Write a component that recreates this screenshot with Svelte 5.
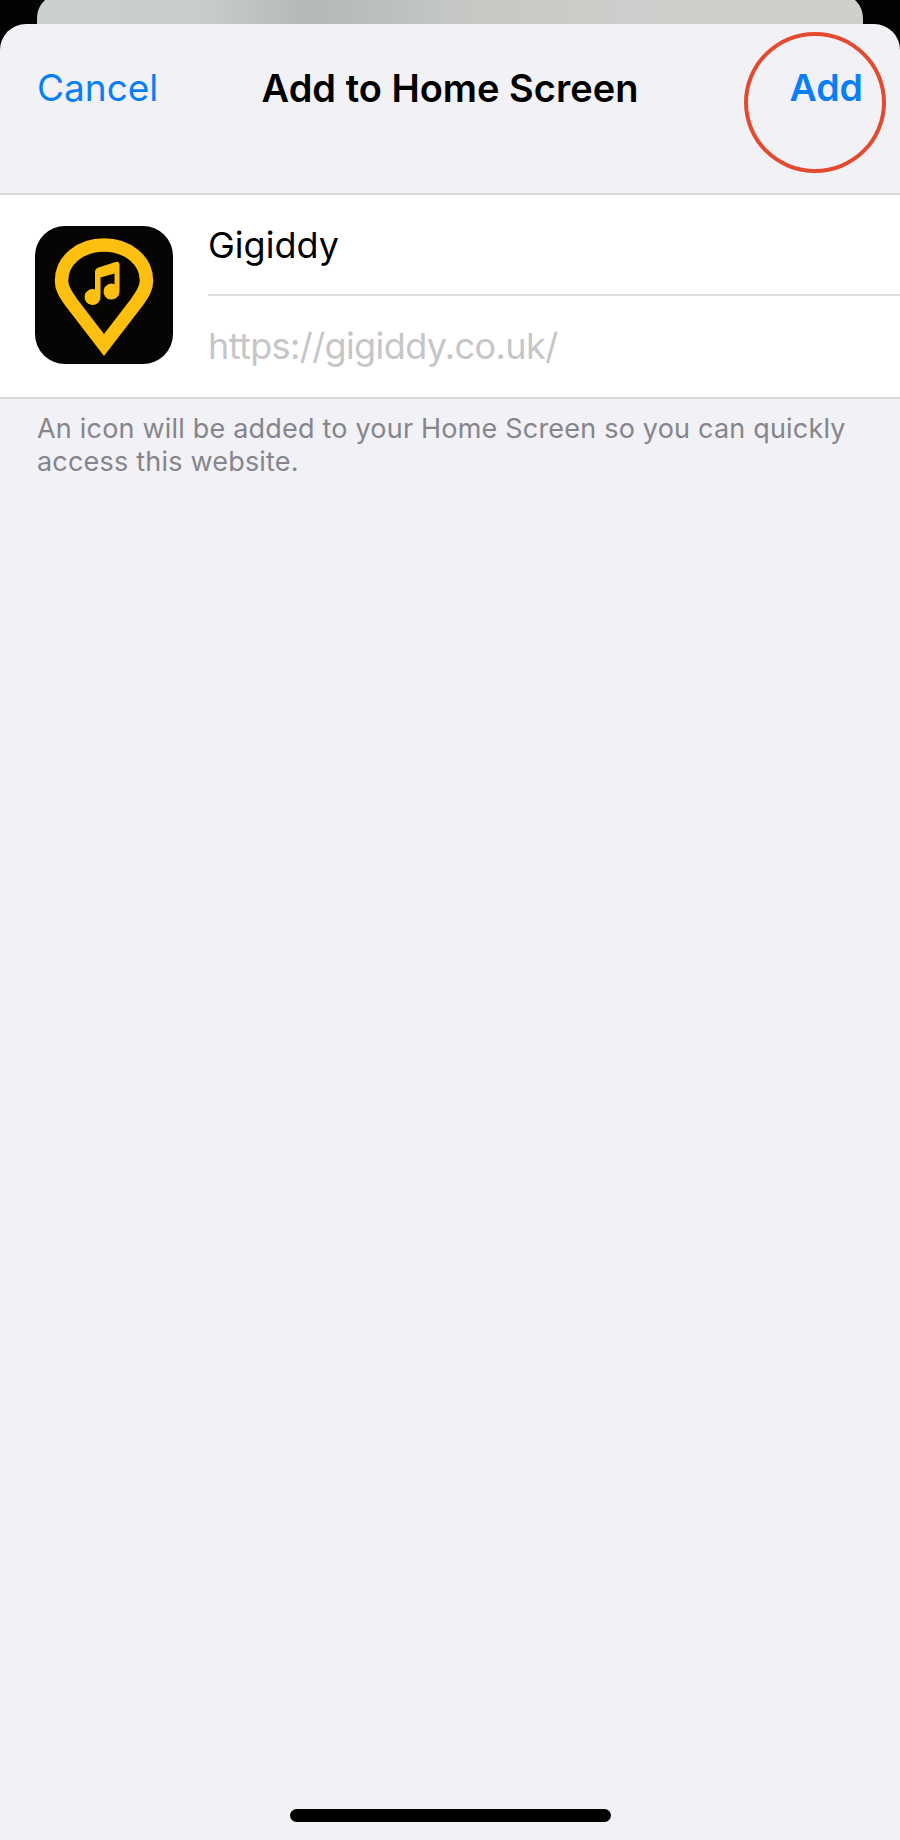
<script>
	const title = 'Add to Home Screen';
	const name = 'Gigiddy';
	const url = 'https://gigiddy.co.uk/';
</script>

<div class="screen">
	<div class="backcard"></div>
	<div class="sheet">
		<header class="nav">
			<span class="cancel">Cancel</span>
			<h1>{title}</h1>
			<span class="add">Add</span>
			<span class="ring"></span>
		</header>
		<section class="row">
			<svg class="icon" viewBox="15 16 138 138" width="138" height="138">
				<rect x="15" y="16" width="138" height="138" rx="30" fill="#060504" />
				<path
					d="M84 135 L51 92 C46 85 41.5 79 41.5 71 C41.5 50 60.6 35 84 35 C107.4 35 126.5 50 126.5 71 C126.5 79 122 85 117 92 Z"
					fill="none"
					stroke="#fdbf10"
					stroke-width="13.5"
					stroke-linejoin="miter"
				/>
				<path
					d="M75 62 Q75 58.5 78.5 57.5 L95.5 52 Q99.5 51 99.5 55 V81.5 A8 8 0 1 1 94.5 74.2 V63.5 L80.5 67.5 V86.5 A8 8 0 1 1 75 79.5 Z"
					fill="#fdbf10"
				/>
			</svg>
			<div class="fields">
				<div class="name">{name}</div>
				<div class="url">{url}</div>
			</div>
		</section>
		<p class="note">An icon will be added to your Home Screen so you can quickly access this website.</p>
		<div class="home"></div>
	</div>
</div>

<style>
	:global(body) {
		margin: 0;
		background: #020403;
	}

	.screen {
		position: relative;
		width: 900px;
		height: 1840px;
		overflow: hidden;
		background: #020403;
		font-family: Inter, 'Liberation Sans', sans-serif;
	}

	.backcard {
		position: absolute;
		top: -6px;
		left: 37px;
		width: 826px;
		height: 80px;
		border-radius: 24px;
		background: linear-gradient(90deg, #cdd1cd 0%, #c9cdc9 20%, #b3b9b5 33%, #c4c7c3 50%, #cdcecb 70%, #cfd0cc 100%);
	}

	.sheet {
		position: absolute;
		top: 24px;
		left: 0;
		width: 900px;
		height: 1816px;
		border-radius: 26px 26px 0 0;
		background: #f1f1f6;
	}

	.nav {
		position: relative;
		height: 171px;
		box-sizing: border-box;
		padding: 42px 37px 0 37px;
		display: grid;
		grid-template-columns: 1fr auto 1fr;
		align-items: start;
		line-height: 44px;
		border-bottom: 2px solid #d9d9dc;
	}

	.nav h1 {
		margin: 0;
		font-size: 38px;
		line-height: 44px;
		font-weight: 600;
		color: #000;
	}

	.cancel {
		color: #0a7ff5;
		font-size: 37px;
	}

	.add {
		justify-self: end;
		color: #0a7ff5;
		font-size: 37.5px;
		font-weight: 600;
	}

	.ring {
		position: absolute;
		top: 8px;
		right: 14px;
		width: 142px;
		height: 141px;
		box-sizing: border-box;
		border: 4px solid #e34a30;
		border-radius: 50%;
	}

	.row {
		display: flex;
		box-sizing: border-box;
		background: #fff;
		height: 204px;
		padding-left: 35px;
		align-items: flex-start;
		gap: 35px;
		border-bottom: 2px solid #d9d9dc;
	}

	.icon {
		flex: none;
		display: block;
		margin-top: 31px;
	}

	.fields {
		flex: 1;
		font-size: 36px;
		line-height: 44px;
	}

	.name {
		height: 101px;
		box-sizing: border-box;
		padding-top: 28px;
		color: #000;
		border-bottom: 2px solid #dedee0;
	}

	.url {
		height: 101px;
		box-sizing: border-box;
		padding-top: 28px;
		letter-spacing: -0.6px;
		color: #c6c6c9;
	}

	.note {
		margin: 0;
		padding: 13px 37px 0;
		font-size: 27px;
		line-height: 33px;
		letter-spacing: 0.2px;
		color: #85858b;
	}

	.home {
		position: absolute;
		left: 290px;
		bottom: 18px;
		width: 321px;
		height: 13px;
		border-radius: 7px;
		background: #000;
	}
</style>
